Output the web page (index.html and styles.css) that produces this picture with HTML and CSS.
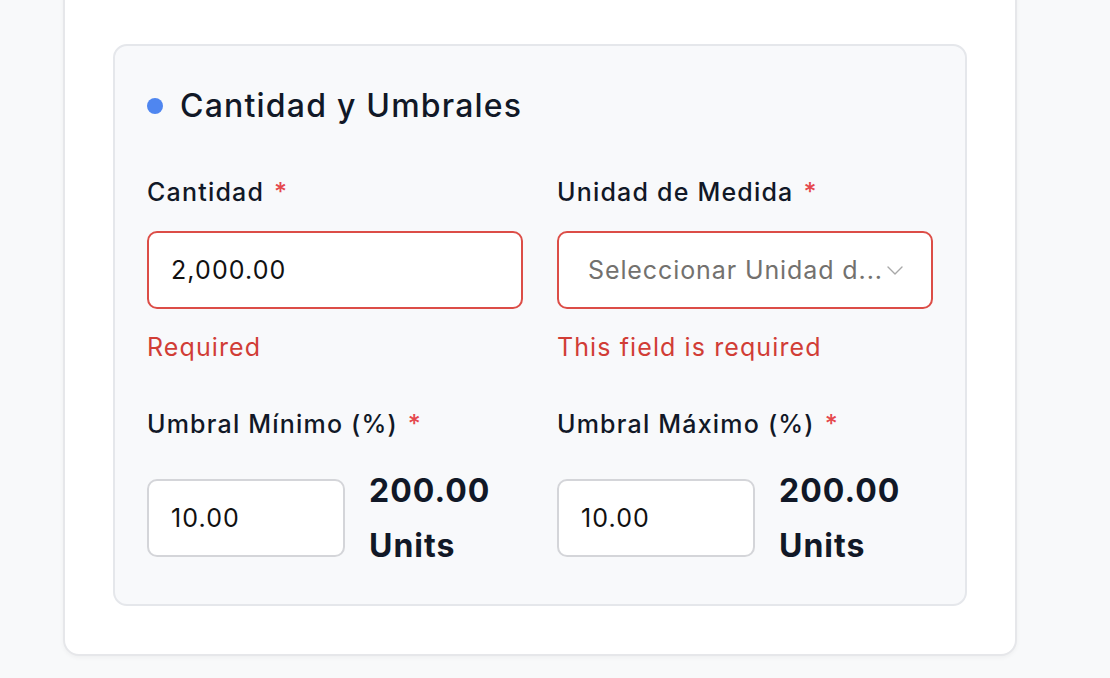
FILE: index.html
```html
<!DOCTYPE html>
<html lang="es">
<head>
<meta charset="utf-8">
<title>Cantidad y Umbrales</title>
<link rel="stylesheet" href="styles.css">
</head>
<body>
<div class="card">
  <section class="section">
    <h2 class="section-title"><span class="dot"></span>Cantidad y Umbrales</h2>
    <div class="grid">
      <div class="field">
        <label class="label">Cantidad <span class="req">*</span></label>
        <div class="input input-error">2,000.00</div>
        <div class="error">Required</div>
      </div>
      <div class="field">
        <label class="label">Unidad de Medida <span class="req">*</span></label>
        <div class="input input-error select">
          <span class="placeholder">Seleccionar Unidad d...</span>
          <svg class="chevron" width="16" height="9" viewBox="0 0 16 9" fill="none"><path d="M1 1l7 7 7-7" stroke="#a8a8a8" stroke-width="1.4" stroke-linecap="round" stroke-linejoin="round"/></svg>
        </div>
        <div class="error">This field is required</div>
      </div>
      <div class="field">
        <label class="label">Umbral Mínimo (%) <span class="req">*</span></label>
        <div class="threshold">
          <div class="input small">10.00</div>
          <div class="value">200.00 Units</div>
        </div>
      </div>
      <div class="field">
        <label class="label">Umbral Máximo (%) <span class="req">*</span></label>
        <div class="threshold">
          <div class="input small">10.00</div>
          <div class="value">200.00 Units</div>
        </div>
      </div>
    </div>
  </section>
</div>
</body>
</html>
```

FILE: styles.css
```css
* { box-sizing: border-box; }
html, body { margin: 0; padding: 0; }
body {
  background: #f8f9fa;
  font-family: Inter, "Noto Sans", "Liberation Sans", sans-serif;
  color: #111827;
  height: 678px;
  overflow: hidden;
}
.card {
  margin: -30px 0 0 63px;
  width: 954px;
  background: #fff;
  border: 2px solid #e6e7ea;
  border-radius: 16px;
  box-shadow: 0 2px 4px rgba(0,0,0,0.04);
  padding: 72px 48px 48px 48px;
}
.section {
  background: #f8f9fb;
  border: 2px solid #e5e7eb;
  border-radius: 14px;
  padding: 32px 32px 31px 32px;
}
.section-title {
  margin: 0 0 40px 0;
  display: flex;
  align-items: center;
  gap: 17px;
  font-size: 32px;
  line-height: 56px;
  font-weight: 500;
  color: #111827;
  letter-spacing: 1.2px;
}
.dot {
  width: 16px;
  height: 16px;
  border-radius: 50%;
  background: #4f86f0;
  flex: none;
}
.grid {
  display: grid;
  grid-template-columns: 376px 376px;
  column-gap: 34px;
  row-gap: 41px;
}
.field { display: flex; flex-direction: column; min-width: 0; }
.label {
  font-size: 25px;
  line-height: 36px;
  font-weight: 500;
  color: #111827;
  margin-bottom: 21px;
  letter-spacing: 1.2px;
}
.req { color: #e5484d; margin-left: 2px; }
.input {
  height: 78px;
  background: #fff;
  border: 2px solid #d4d5d9;
  border-radius: 10px;
  padding: 0 22px;
  display: flex;
  align-items: center;
  font-size: 25px;
  color: #111;
  letter-spacing: 1.1px;
}
.input-error { border-color: #dc4d47; }
.select { padding: 0 28px 0 29px; justify-content: space-between; }
.placeholder {
  color: #73716e;
  white-space: nowrap;
  letter-spacing: 0.9px;
}
.chevron { flex: none; }
.error {
  margin-top: 20px;
  font-size: 25px;
  line-height: 36px;
  color: #d13d36;
  letter-spacing: 1.1px;
}
.threshold {
  display: flex;
  align-items: center;
  gap: 24px;
}
.small { width: 198px; flex: none; }
.value {
  font-size: 32px;
  line-height: 55px;
  font-weight: 700;
  color: #111827;
  width: 140px;
  letter-spacing: 1px;
}
```
